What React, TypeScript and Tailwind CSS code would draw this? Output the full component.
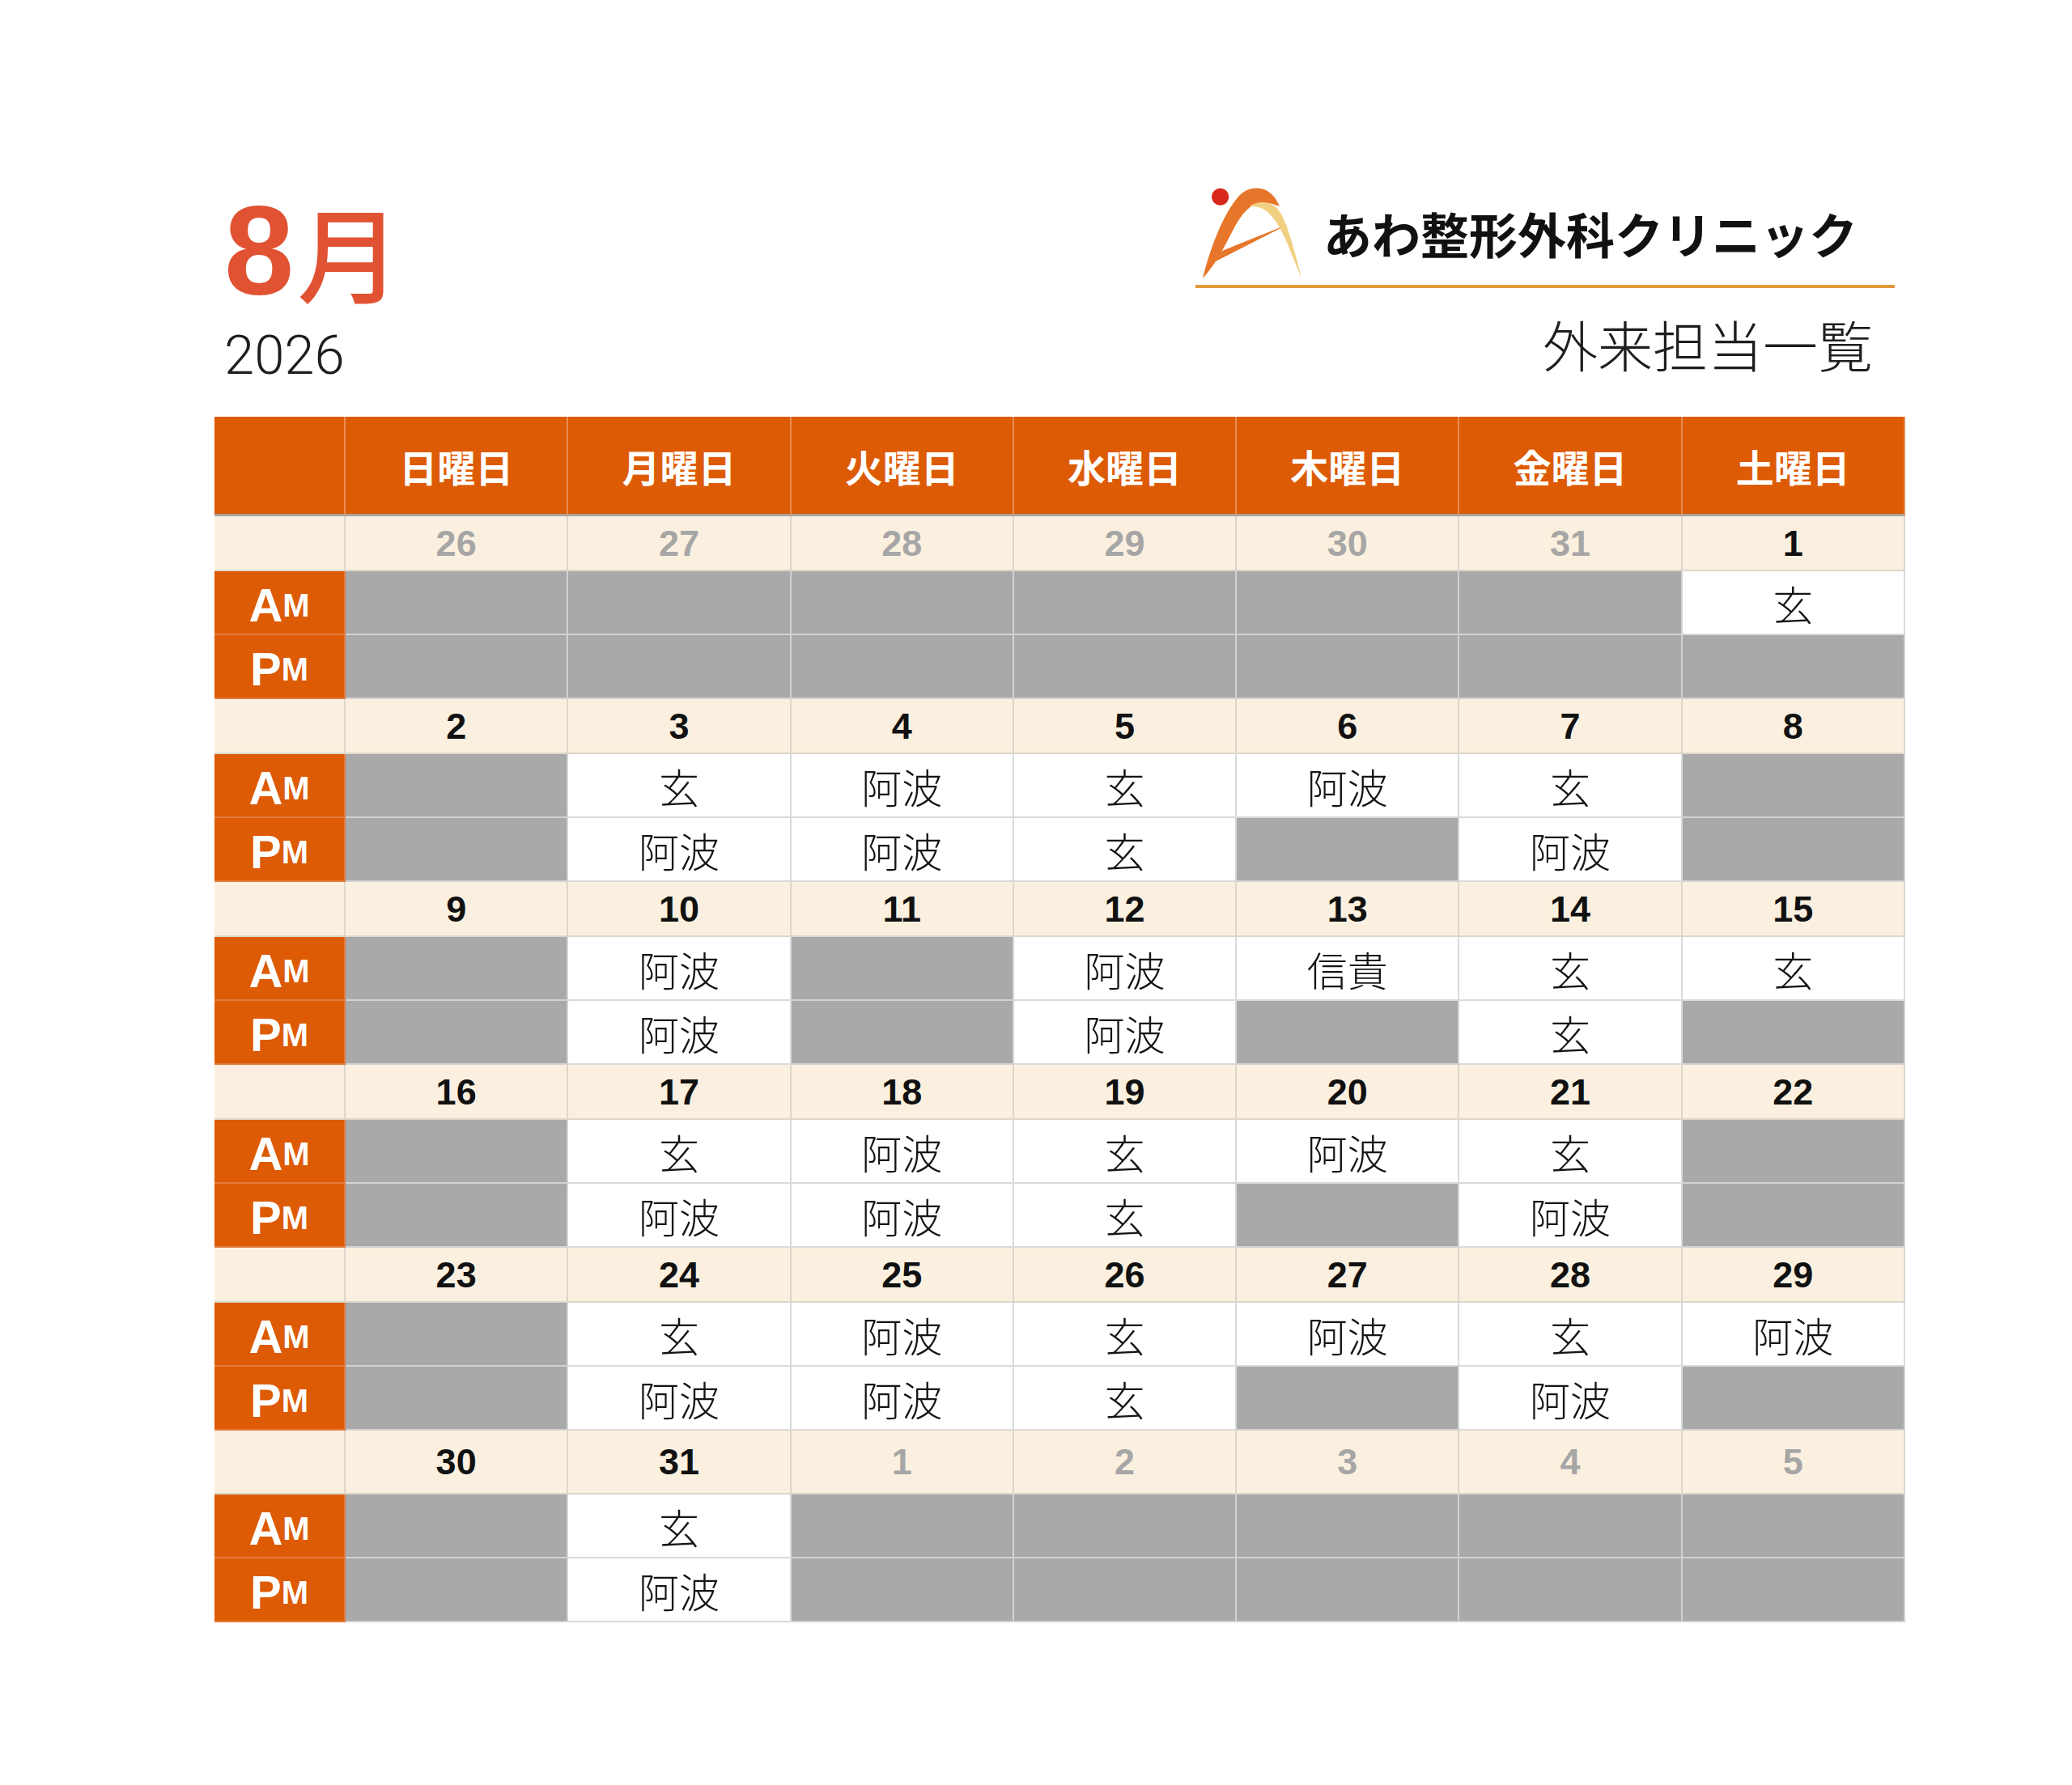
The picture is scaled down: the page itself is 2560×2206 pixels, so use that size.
import React from 'react';

type Slot = string | null;

interface Week {
  dates: [number, boolean][];
  am: Slot[];
  pm: Slot[];
}

const days = ['日曜日', '月曜日', '火曜日', '水曜日', '木曜日', '金曜日', '土曜日'];

const G = '玄';
const A = '阿波';
const S = '信貴';

const weeks: Week[] = [
  {
    dates: [[26, true], [27, true], [28, true], [29, true], [30, true], [31, true], [1, false]],
    am: [null, null, null, null, null, null, G],
    pm: [null, null, null, null, null, null, null],
  },
  {
    dates: [[2, false], [3, false], [4, false], [5, false], [6, false], [7, false], [8, false]],
    am: [null, G, A, G, A, G, null],
    pm: [null, A, A, G, null, A, null],
  },
  {
    dates: [[9, false], [10, false], [11, false], [12, false], [13, false], [14, false], [15, false]],
    am: [null, A, null, A, S, G, G],
    pm: [null, A, null, A, null, G, null],
  },
  {
    dates: [[16, false], [17, false], [18, false], [19, false], [20, false], [21, false], [22, false]],
    am: [null, G, A, G, A, G, null],
    pm: [null, A, A, G, null, A, null],
  },
  {
    dates: [[23, false], [24, false], [25, false], [26, false], [27, false], [28, false], [29, false]],
    am: [null, G, A, G, A, G, A],
    pm: [null, A, A, G, null, A, null],
  },
  {
    dates: [[30, false], [31, false], [1, true], [2, true], [3, true], [4, true], [5, true]],
    am: [null, G, null, null, null, null, null],
    pm: [null, A, null, null, null, null, null],
  },
];

function Logo() {
  return (
    <svg width="124" height="114" viewBox="6 10 124 114">
      <circle cx="27.7" cy="22.3" r="10.6" fill="#d8281d" />
      <path
        d="M6,123 C14,90 30,45 50,22 C58,13 68,10 78,12 C88,14 96,22 101,34 C94,31 82,28 72,31 C60,35 50,50 42,66 C32,86 20,108 6,123 Z"
        fill="#e6762a"
      />
      <path d="M16,105 L112,56 L30,89 Z" fill="#e6762a" />
      <path
        d="M64,34 C72,28 84,27 94,33 C104,40 110,58 116,78 C121,95 125,110 128,123 C122,108 114,88 106,70 C98,54 90,42 80,37 C74,34 68,34 64,34 Z"
        fill="#f2d083"
      />
    </svg>
  );
}

function SlotLabel({ big, small }: { big: string; small: string }) {
  return (
    <div className="flex items-center justify-center bg-[#dd5b05] border-b-2 border-r-2 border-[#e27a3c] text-white font-bold font-['Liberation_Sans',sans-serif] leading-none pt-[6px]">
      <span className="text-[58px]">{big}</span>
      <span className="text-[40px]">{small}</span>
    </div>
  );
}

function SlotCell({ value }: { value: Slot }) {
  if (value === null) {
    return <div className="bg-[#a9a9a9] border-b-2 border-r-2 border-[#d2d2d2]" />;
  }
  return (
    <div className="flex items-center justify-center bg-white border-b-2 border-r-2 border-[#dadada] text-[50px] font-light text-[#151515] leading-none">
      {value}
    </div>
  );
}

export default function App() {
  return (
    <div className="w-[2560px] h-[2206px] bg-white font-['Noto_Sans_CJK_JP',sans-serif] pl-[265px] pt-[232px]">
      <div className="w-[2089px]">
        {/* header */}
        <div className="flex justify-between px-[12px] h-[283px]">
          <div className="flex flex-col">
            <div className="flex items-center h-[155px] text-[#e05232] leading-none">
              <span className="text-[155px] font-bold font-['Liberation_Sans',sans-serif] leading-none">8</span>
              <span className="text-[128px] font-medium leading-none ml-[4px]">月</span>
            </div>
            <div className="mt-[19px] text-[67px] font-light leading-none text-[#1e1e1e] font-['Roboto',sans-serif]">
              2026
            </div>
          </div>
          <div className="flex flex-col w-[864px] mr-[1px]">
            <div className="flex items-center h-[111px] pl-[9px] gap-[25px]">
              <Logo />
              <div className="text-[60px] font-bold leading-none text-[#111]">
                あわ整形外科クリニック
              </div>
            </div>
            <div className="mt-[9px] h-[4px] bg-[#e29a3c]" />
            <div className="mt-[35px] pr-[27px] text-right text-[68px] font-light leading-none text-[#1e1e1e]">
              外来担当一覧
            </div>
          </div>
        </div>

        {/* table */}
        <div className="grid grid-cols-[162px_repeat(7,1fr)]">
          <div className="h-[123px] bg-[#dd5b05] border-b-[3px] border-r-2 border-b-[#aaa39c] border-r-[#e98c55]" />
          {days.map((d) => (
            <div
              key={d}
              className="h-[123px] flex items-center justify-center bg-[#dd5b05] border-b-[3px] border-r-2 border-b-[#aaa39c] border-r-[#e98c55] text-white text-[47px] font-bold leading-none"
            >
              {d}
            </div>
          ))}

          {weeks.map((w, wi) => (
            <React.Fragment key={wi}>
              <div
                className={`${wi === weeks.length - 1 ? 'h-[79px]' : 'h-[68px]'} bg-[#fbf0df] border-b-2 border-r-2 border-[#dcd6cc]`}
              />
              {w.dates.map(([n, faded], di) => (
                <div
                  key={di}
                  className={`${wi === weeks.length - 1 ? 'h-[79px]' : 'h-[68px]'} flex items-center justify-center bg-[#fbf0df] border-b-2 border-r-2 border-[#dcd6cc] font-['Liberation_Sans',sans-serif] text-[45px] font-bold leading-none ${
                    faded ? 'text-[#a6a6a6]' : 'text-[#111]'
                  }`}
                >
                  {n}
                </div>
              ))}

              <div className="h-[79px] grid">
                <SlotLabel big="A" small="M" />
              </div>
              {w.am.map((v, i) => (
                <div key={i} className="h-[79px] grid">
                  <SlotCell value={v} />
                </div>
              ))}
              <div className="h-[79px] grid">
                <SlotLabel big="P" small="M" />
              </div>
              {w.pm.map((v, i) => (
                <div key={i} className="h-[79px] grid">
                  <SlotCell value={v} />
                </div>
              ))}
            </React.Fragment>
          ))}
        </div>
      </div>
    </div>
  );
}
